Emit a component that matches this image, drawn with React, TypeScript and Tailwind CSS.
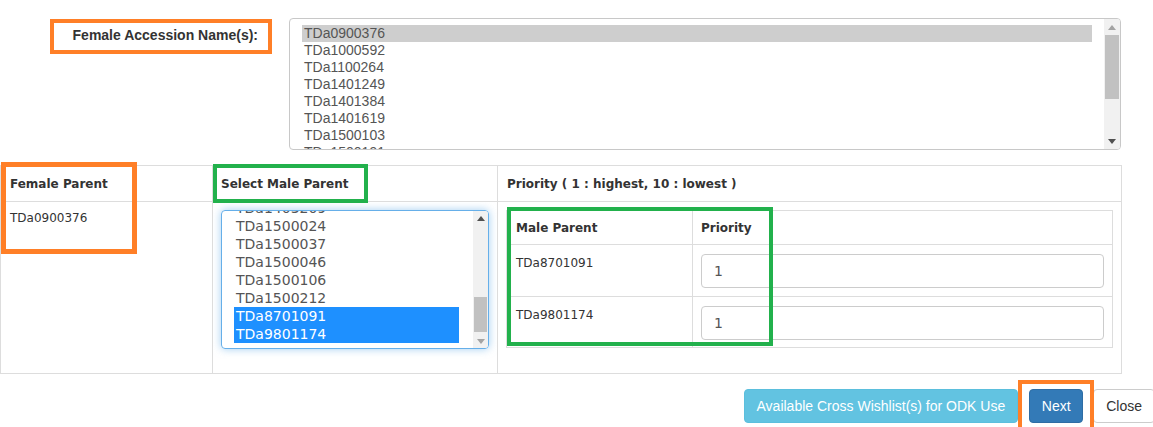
const femaleNames = [
  "TDa0900376",
  "TDa1000592",
  "TDa1100264",
  "TDa1401249",
  "TDa1401384",
  "TDa1401619",
  "TDa1500103",
  "TDa1500191",
];

const maleNames = [
  "TDa1403209",
  "TDa1500024",
  "TDa1500037",
  "TDa1500046",
  "TDa1500106",
  "TDa1500212",
  "TDa8701091",
  "TDa9801174",
];

const selectedMales = ["TDa8701091", "TDa9801174"];

function Arrow({ up, color }: { up?: boolean; color: string }) {
  return (
    <svg width="8" height="5" viewBox="0 0 8 5">
      <polygon points={up ? "0,5 8,5 4,0" : "0,0 8,0 4,5"} fill={color} />
    </svg>
  );
}

export default function App() {
  return (
    <div className="relative w-[1153px] h-[427px] overflow-hidden bg-white text-[#333]">
      {/* Female accession list */}
      <div className="flex pt-[18px]">
        <div className="w-[289px] shrink-0 pt-[7px] pr-[31px] text-right font-['Liberation_Sans',Arial,sans-serif] text-[14px] leading-5 font-bold text-[#333]">
          Female Accession Name(s):
        </div>
        <div className="flex w-[832px] h-[132px] border border-[#c8c8c8] rounded-[4px] overflow-hidden">
          <div className="flex-1 pl-3 pr-3 pt-[6px] overflow-hidden font-['Liberation_Sans',Arial,sans-serif] text-[14px] leading-[17px] text-[#555]">
            {femaleNames.map((n, i) => (
              <div key={n} className={`pl-[2px] h-[17px] ${i === 0 ? "bg-[#cecece]" : ""}`}>
                {n}
              </div>
            ))}
          </div>
          <div className="w-4 flex flex-col bg-[#f1f1f1]">
            <div className="h-4 flex items-center justify-center">
              <Arrow up color="#a3a3a3" />
            </div>
            <div className="h-[64px] mx-[1px] bg-[#c1c1c1]" />
            <div className="flex-1" />
            <div className="h-4 flex items-center justify-center">
              <Arrow color="#505050" />
            </div>
          </div>
        </div>
      </div>

      {/* Parent table */}
      <table className="mt-[15px] w-[1122px] table-fixed border-collapse font-['DejaVu_Sans',Verdana,sans-serif] text-[12px] text-[#333]">
        <colgroup>
          <col className="w-[212px]" />
          <col className="w-[285px]" />
          <col />
        </colgroup>
        <thead>
          <tr className="h-[36px]">
            <th className="border border-[#ddd] px-[9px] text-left font-bold">Female Parent</th>
            <th className="border border-[#ddd] px-2 text-left font-bold">Select Male Parent</th>
            <th className="border border-[#ddd] px-[9px] text-left font-bold">
              Priority ( 1 : highest, 10 : lowest )
            </th>
          </tr>
        </thead>
        <tbody>
          <tr className="h-[172px]">
            <td className="border border-[#ddd] px-[9px] pt-[7px] align-top">TDa0900376</td>
            <td className="border border-[#ddd] px-2 pt-2 align-top">
              <div className="flex h-[139px] border border-[#66afe9] rounded-[4px] overflow-hidden shadow-[0_0_8px_rgba(102,175,233,0.6)]">
                <div className="flex-1 pl-3 pr-[14px] pt-[6px] overflow-hidden text-[14px] leading-[18px] text-[#555]">
                  <div className="-mt-[18px]">
                    {maleNames.map((n) => (
                      <div
                        key={n}
                        className={`pl-[2px] h-[18px] ${
                          selectedMales.includes(n) ? "bg-[#1e90ff] text-white" : ""
                        }`}
                      >
                        {n}
                      </div>
                    ))}
                  </div>
                </div>
                <div className="w-[15px] flex flex-col bg-[#f1f1f1]">
                  <div className="h-[14px] flex items-center justify-center">
                    <Arrow up color="#505050" />
                  </div>
                  <div className="h-[72px]" />
                  <div className="h-[35px] mx-[1px] bg-[#c1c1c1]" />
                  <div className="flex-1" />
                  <div className="h-[14px] flex items-center justify-center">
                    <Arrow color="#a3a3a3" />
                  </div>
                </div>
              </div>
            </td>
            <td className="border border-[#ddd] px-2 pt-2 align-top">
              <table className="w-full table-fixed border-collapse">
                <colgroup>
                  <col className="w-[186px]" />
                  <col />
                </colgroup>
                <thead>
                  <tr className="h-[34px]">
                    <th className="border border-[#ddd] px-[9px] text-left font-bold">Male Parent</th>
                    <th className="border border-[#ddd] px-[8px] text-left font-bold">Priority</th>
                  </tr>
                </thead>
                <tbody>
                  {selectedMales.map((n, i) => (
                    <tr key={n} className={i === 0 ? "h-[52px]" : "h-[51px]"}>
                      <td className="border border-[#ddd] px-[9px] pt-[9px] align-top">{n}</td>
                      <td className="border border-[#ddd] px-2 pt-[9px] align-top">
                        <input
                          readOnly
                          value="1"
                          className="w-full h-[34px] px-3 border border-[#ccc] rounded-[4px] text-[14px] text-[#555] font-['DejaVu_Sans',Verdana,sans-serif] outline-none"
                        />
                      </td>
                    </tr>
                  ))}
                </tbody>
              </table>
            </td>
          </tr>
        </tbody>
      </table>

      {/* Footer buttons */}
      <div className="flex justify-end items-center mt-[15px] mr-[-2px] font-['Liberation_Sans',Arial,sans-serif] text-[14px]">
        <button className="h-[34px] px-3 rounded-[4px] border border-[#5bbfdd] bg-[#62c3e1] text-white">
          Available Cross Wishlist(s) for ODK Use
        </button>
        <button className="ml-[11px] h-[34px] w-[54px] rounded-[4px] border border-[#2e6da4] bg-[#337ab7] text-white">
          Next
        </button>
        <button className="ml-[10px] h-[34px] px-3 rounded-[4px] border border-[#ccc] bg-white text-[#333]">
          Close
        </button>
      </div>

      {/* Annotation boxes */}
      <div className="absolute left-[50px] top-[19px] w-[222px] h-[35px] border-4 border-[#ff7f27]" />
      <div className="absolute left-[1px] top-[162px] w-[136px] h-[92px] border-[5px] border-[#ff7f27]" />
      <div className="absolute left-[213px] top-[164px] w-[155px] h-[39px] border-4 border-[#22b14c]" />
      <div className="absolute left-[507px] top-[207px] w-[266px] h-[139px] border-4 border-[#22b14c]" />
      <div className="absolute left-[1018px] top-[380px] w-[76px] h-[52px] border-4 border-[#ff7f27]" />
    </div>
  );
}
